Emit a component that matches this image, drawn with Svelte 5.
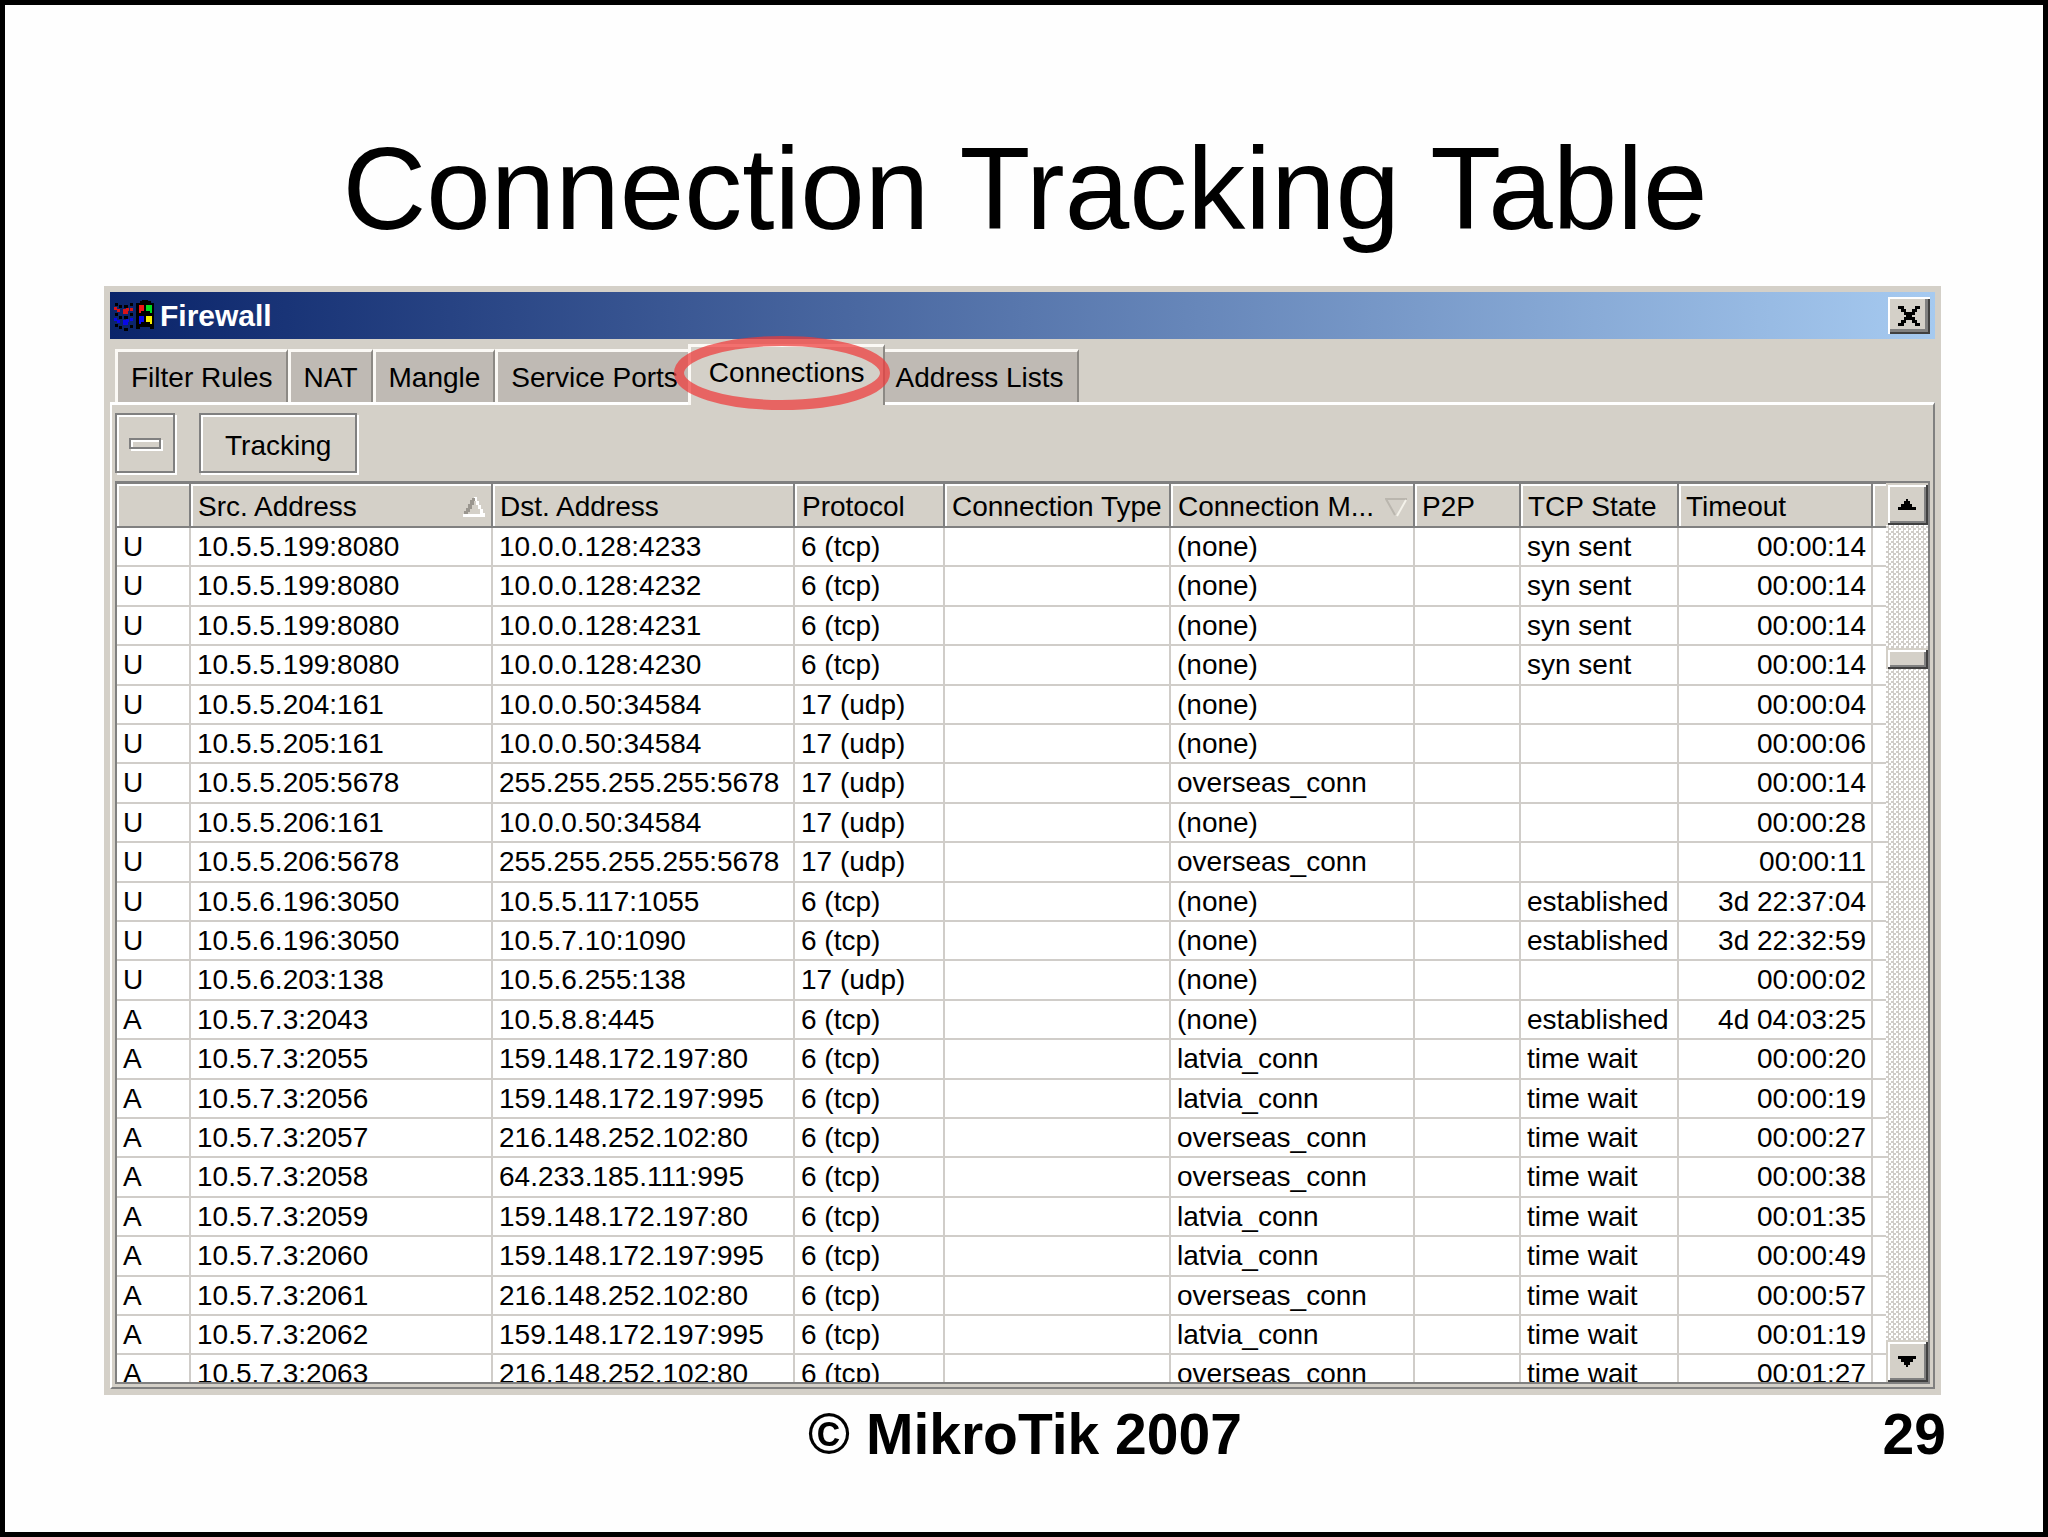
<script>

  let tabs = ["Filter Rules", "NAT", "Mangle", "Service Ports", "Connections", "Address Lists"]

  let active_tab = "Connections"

  let columns = [
    { key: "flag", title: "", sort: "" },
    { key: "src", title: "Src. Address", sort: "up" },
    { key: "dst", title: "Dst. Address", sort: "" },
    { key: "protocol", title: "Protocol", sort: "" },
    { key: "type", title: "Connection Type", sort: "" },
    { key: "mark", title: "Connection M...", sort: "down" },
    { key: "p2p", title: "P2P", sort: "" },
    { key: "state", title: "TCP State", sort: "" },
    { key: "timeout", title: "Timeout", sort: "" },
    { key: "rest", title: "", sort: "" },
  ]

  let connections = [
    ["U", "10.5.5.199:8080", "10.0.0.128:4233", "6 (tcp)", "", "(none)", "", "syn sent", "00:00:14", ""],
    ["U", "10.5.5.199:8080", "10.0.0.128:4232", "6 (tcp)", "", "(none)", "", "syn sent", "00:00:14", ""],
    ["U", "10.5.5.199:8080", "10.0.0.128:4231", "6 (tcp)", "", "(none)", "", "syn sent", "00:00:14", ""],
    ["U", "10.5.5.199:8080", "10.0.0.128:4230", "6 (tcp)", "", "(none)", "", "syn sent", "00:00:14", ""],
    ["U", "10.5.5.204:161", "10.0.0.50:34584", "17 (udp)", "", "(none)", "", "", "00:00:04", ""],
    ["U", "10.5.5.205:161", "10.0.0.50:34584", "17 (udp)", "", "(none)", "", "", "00:00:06", ""],
    ["U", "10.5.5.205:5678", "255.255.255.255:5678", "17 (udp)", "", "overseas_conn", "", "", "00:00:14", ""],
    ["U", "10.5.5.206:161", "10.0.0.50:34584", "17 (udp)", "", "(none)", "", "", "00:00:28", ""],
    ["U", "10.5.5.206:5678", "255.255.255.255:5678", "17 (udp)", "", "overseas_conn", "", "", "00:00:11", ""],
    ["U", "10.5.6.196:3050", "10.5.5.117:1055", "6 (tcp)", "", "(none)", "", "established", "3d 22:37:04", ""],
    ["U", "10.5.6.196:3050", "10.5.7.10:1090", "6 (tcp)", "", "(none)", "", "established", "3d 22:32:59", ""],
    ["U", "10.5.6.203:138", "10.5.6.255:138", "17 (udp)", "", "(none)", "", "", "00:00:02", ""],
    ["A", "10.5.7.3:2043", "10.5.8.8:445", "6 (tcp)", "", "(none)", "", "established", "4d 04:03:25", ""],
    ["A", "10.5.7.3:2055", "159.148.172.197:80", "6 (tcp)", "", "latvia_conn", "", "time wait", "00:00:20", ""],
    ["A", "10.5.7.3:2056", "159.148.172.197:995", "6 (tcp)", "", "latvia_conn", "", "time wait", "00:00:19", ""],
    ["A", "10.5.7.3:2057", "216.148.252.102:80", "6 (tcp)", "", "overseas_conn", "", "time wait", "00:00:27", ""],
    ["A", "10.5.7.3:2058", "64.233.185.111:995", "6 (tcp)", "", "overseas_conn", "", "time wait", "00:00:38", ""],
    ["A", "10.5.7.3:2059", "159.148.172.197:80", "6 (tcp)", "", "latvia_conn", "", "time wait", "00:01:35", ""],
    ["A", "10.5.7.3:2060", "159.148.172.197:995", "6 (tcp)", "", "latvia_conn", "", "time wait", "00:00:49", ""],
    ["A", "10.5.7.3:2061", "216.148.252.102:80", "6 (tcp)", "", "overseas_conn", "", "time wait", "00:00:57", ""],
    ["A", "10.5.7.3:2062", "159.148.172.197:995", "6 (tcp)", "", "latvia_conn", "", "time wait", "00:01:19", ""],
    ["A", "10.5.7.3:2063", "216.148.252.102:80", "6 (tcp)", "", "overseas_conn", "", "time wait", "00:01:27", ""],
  ]

</script>

<main class="slide">

  <h1>Connection Tracking Table</h1>

  <section class="window">

    <header class="title-bar">
      <svg class="flag-icon" viewBox="0 0 40 32" shape-rendering="crispEdges">
        <path fill="#000" d="M22 3h4V1h2V0h6v1h3v2h3v26h-4v-2h-10v2h-4z" />
        <path fill="#000" d="M1 3h3v3h-3zM5 5h3v3h-3zM10 5h4v3h-4zM16 3h3v3h-3zM1 13h3v3h-3zM5 16h3v3h-3zM10 16h4v3h-4zM16 13h3v3h-3zM1 24h3v3h-3zM5 26h3v3h-3zM10 28h4v3h-4zM16 25h3v3h-3z" />
        <path fill="#d81418" d="M0 7h3v3h-3zM3 9h3v3h-3zM9 9h5v5h-5zM12 8h3v3h-3zM16 8h3v3h-3z" />
        <path fill="#0808e8" d="M0 18h3v3h-3zM3 20h3v3h-3zM9 20h5v5h-5zM12 19h3v3h-3zM16 18h3v3h-3z" />
        <path fill="#f01414" d="M25 5h5v6h-3v2h-2z" />
        <path fill="#0808f0" d="M25 16h5v6h-3v2h-2z" />
        <path fill="#00dc20" d="M32 5h6v8h-2v-2h-4z" />
        <path fill="#f8f000" d="M32 16h6v8h-2v-2h-4z" />
      </svg>
      <span class="window-title">Firewall</span>
      <button class="close" aria-label="Close">
        <svg viewBox="0 0 8 7" shape-rendering="crispEdges">
          <path d="M0 0h2v1h1v1h2v-1h1v-1h2v1h-1v1h-1v1h-1v1h1v1h1v1h1v1h-2v-1h-1v-1h-2v1h-1v1h-2v-1h1v-1h1v-1h1v-1h-1v-1h-1v-1h-1z" />
        </svg>
      </button>
    </header>

    <nav class="tabs">
      {#each tabs as tab}
        <button class="tab" class:selected={tab == active_tab} on:click={() => active_tab = tab}>
          {tab}
          {#if tab == "Connections"}
            <svg class="marker" viewBox="0 0 216 74">
              <ellipse cx="108" cy="37" rx="103" ry="32" />
            </svg>
          {/if}
        </button>
      {/each}
    </nav>

    <div class="panel">

      <div class="toolbar">
        <button class="tool remove" aria-label="Remove"><span class="minus"></span></button>
        <button class="tool tracking">Tracking</button>
      </div>

      <div class="list">

        <div class="table-clip">
          <table>
            <colgroup>
              {#each columns as column}
                <col class={column.key} />
              {/each}
            </colgroup>
            <thead>
              <tr>
                {#each columns as column}
                  <th>
                    <div class="head">
                      <span>{column.title}</span>
                      {#if column.sort == "up"}
                        <svg class="sort" viewBox="0 0 22 20" shape-rendering="crispEdges">
                          <path fill="#fff" d="M11 0h3v4h2v4h2v4h2v4h2v4h-22v-3h2z" />
                          <path fill="#9a968f" d="M9 1h3v3h-1v4h-2v4h-2v3h-2v2h-4v-3h2v-3h2v-4h2v-4h2z" />
                          <path fill="#d4d0c8" d="M11 4h2v4h2v4h2v5h-12v-2h2v-3h2v-4h2z" />
                        </svg>
                      {/if}
                      {#if column.sort == "down"}
                        <svg class="sort" viewBox="0 0 22 20">
                          <path fill="none" stroke="#bab6ae" stroke-width="2" d="M22 2h-21l9 16" />
                          <path fill="none" stroke="#f4f2ea" stroke-width="2" d="M21 3l-9 16" />
                        </svg>
                      {/if}
                    </div>
                  </th>
                {/each}
              </tr>
            </thead>
            <tbody>
              {#each connections as row}
                <tr>
                  {#each row as item, i}
                    <td class:right={columns[i].key == "timeout"}>{item}</td>
                  {/each}
                </tr>
              {/each}
            </tbody>
          </table>
        </div>

        <div class="scrollbar">
          <button class="arrow" aria-label="Scroll up">
            <svg viewBox="0 0 18 11"><path d="M8 0h2v2h2v3h2v3h4v3h-18v-3h3v-3h3v-3h2z" /></svg>
          </button>
          <div class="track">
            <div class="thumb"></div>
          </div>
          <button class="arrow" aria-label="Scroll down">
            <svg viewBox="0 0 18 11"><path d="M0 0h18v3h-3v3h-3v3h-2v2h-2v-2h-2v-3h-3v-3h-3z" /></svg>
          </button>
        </div>

      </div>
    </div>
  </section>

  <footer>
    <span></span>
    <span>© MikroTik 2007</span>
    <span class="page">29</span>
  </footer>

</main>


<style>

  :global(body) {

    margin: 0;
  }

  .slide {

    box-sizing: border-box;

    display: flex;
    flex-direction: column;

    height: 100vh;

    padding: 0 102px 0 99px;

    border: 5px solid black;

    background-color: #fefefe;
    color: black;

    font-family: "Liberation Sans", Arial, sans-serif;
  }

  h1 {

    margin: 0 -5px 0 0;
    padding-top: 118px;

    font-size: 116px;
    font-weight: normal;
    line-height: 132px;

    text-align: center;
    white-space: nowrap;

    height: 163px;
  }

  button {

    box-sizing: border-box;

    margin: 0;
    padding: 0;

    border: none;
    border-radius: 0;

    color: black;

    font: inherit;
  }

  .window {

    flex: 1;
    min-height: 0;

    display: flex;
    flex-direction: column;

    padding: 6px;

    background-color: #d4d0c8;

    font-size: 28px;
    line-height: 36px;
  }

  .title-bar {

    display: flex;
    align-items: center;

    height: 47px;

    padding: 0 5px 0 4px;

    background: linear-gradient(to right, #0a246a, #a6caf0);
  }

  .flag-icon {

    width: 40px;
    height: 32px;

    margin-right: 6px;
  }

  .window-title {

    flex: 1;

    color: white;

    font-size: 30px;
    font-weight: bold;
  }

  .close {

    display: flex;
    align-items: center;
    justify-content: center;

    width: 42px;
    height: 37px;

    background-color: #d4d0c8;

    box-shadow: inset 2px 2px white, inset -2px -2px #404040, inset -5px -5px #808080;
  }

  .close svg {

    width: 22px;
    height: 20px;
  }

  .tabs {

    display: flex;
    align-items: flex-end;

    height: 63px;

    padding-left: 5px;
  }

  .tab {

    position: relative;

    height: 53px;

    padding: 2px 13px 0 13px;

    border-top: 3px solid #fbf9f5;
    border-left: 3px solid #fbf9f5;
    border-right: 2px solid #8c8984;

    background-color: #bfbab4;

    white-space: nowrap;
  }

  .tab.selected {

    z-index: 1;

    height: 61px;

    margin: 0 -5px -3px -5px;
    padding: 0 18px 6px 18px;

    background-color: #d4d0c8;
  }

  /* hand drawn ring round the tab, hangs over its neighbours */
  .marker {

    position: absolute;

    left: -17px;
    top: -11px;

    width: 216px;
    height: 74px;
  }

  .marker ellipse {

    fill: none;
    stroke: #ee3a3a;
    stroke-opacity: 0.72;
    stroke-width: 10;
  }

  .panel {

    flex: 1;
    min-height: 0;

    display: flex;
    flex-direction: column;

    padding: 8px 3px 3px 3px;

    border-top: 3px solid white;
    border-left: 2px solid white;
    border-right: 2px solid #808080;
    border-bottom: 2px solid #808080;
  }

  .toolbar {

    display: flex;
    gap: 24px;

    margin-bottom: 8px;
  }

  .tool {

    display: flex;
    align-items: center;
    justify-content: center;

    height: 60px;

    border: 2px solid #808080;

    background-color: #d4d0c8;

    box-shadow: inset 2px 2px white, 2px 2px white;
  }

  .remove {

    width: 60px;
  }

  .tracking {

    padding: 6px 24px 0 24px;
  }

  .minus {

    box-sizing: border-box;

    width: 32px;
    height: 11px;

    border: 2px solid #808080;

    box-shadow: inset 2px 2px white, 2px 2px white;
  }

  .list {

    flex: 1;
    min-height: 0;

    display: flex;

    border: 2px solid #808080;

    background-color: white;
  }

  .table-clip {

    flex: 1;
    min-width: 0;

    overflow: hidden;
  }

  table {

    table-layout: fixed;

    width: 100%;

    border-collapse: separate;
    border-spacing: 0;
  }

  .flag { width: 74px; }
  .src { width: 302px; }
  .dst { width: 302px; }
  .protocol { width: 150px; }
  .type { width: 226px; }
  .mark { width: 244px; }
  .p2p { width: 106px; }
  .state { width: 158px; }
  .timeout { width: 194px; }

  th {

    height: 43px;

    padding: 0 0 2px 0;

    background-color: #808080;

    font-weight: normal;
    text-align: left;
  }

  .head {

    box-sizing: border-box;

    display: flex;
    align-items: center;
    justify-content: space-between;

    height: 42px;

    margin-right: 2px;
    padding: 2px 6px 0 5px;

    border-top: 2px solid white;
    border-left: 2px solid white;

    background-color: #d4d0c8;

    white-space: nowrap;
  }

  .sort {

    width: 22px;
    height: 20px;
  }

  td {

    box-sizing: border-box;

    height: 39px;

    padding: 0 5px 0 6px;

    border-right: 2px solid #d0cdc9;
    border-bottom: 2px solid #d0cdc9;

    line-height: 36px;
    white-space: nowrap;
  }

  tr:nth-child(5n + 2) td,
  tr:nth-child(5n + 4) td {

    height: 40px;
  }

  .right {

    text-align: right;
  }

  th:last-child .head {

    margin-right: 0;
  }

  td:last-child {

    border-right: none;
  }

  .scrollbar {

    display: flex;
    flex-direction: column;

    width: 42px;

    background: repeating-conic-gradient(#d0cdc8 0 25%, white 0 50%) 0 0 / 5px 5px;
  }

  .arrow {

    display: flex;
    align-items: center;
    justify-content: center;

    height: 42px;

    background-color: #d4d0c8;
  }

  .arrow,
  .thumb {

    box-shadow: inset 2px 2px #d4d0c8, inset -2px -2px #404040, inset 4px 4px white, inset -4px -4px #808080;
  }

  .arrow svg {

    width: 18px;
    height: 11px;
  }

  .track {

    flex: 1;

    padding-top: 123px;
  }

  .thumb {

    height: 21px;

    background-color: #d4d0c8;
  }

  footer {

    display: grid;
    grid-template-columns: 1fr auto 1fr;

    height: 137px;

    margin-right: -5px;

    font-size: 57px;
    font-weight: bold;
    line-height: 78px;
  }

  .page {

    text-align: right;
  }

</style>
